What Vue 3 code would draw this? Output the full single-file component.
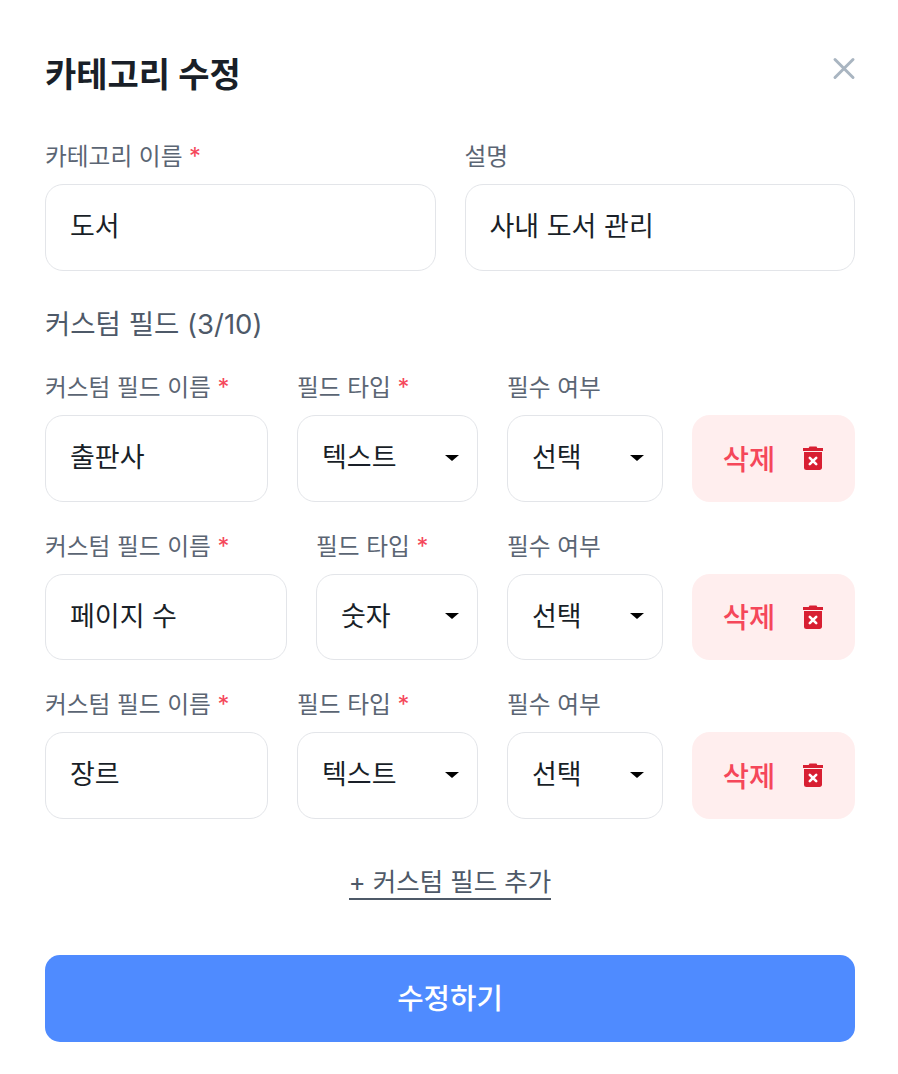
<template>
  <div class="modal">
    <div class="modal-header">
      <h2 class="modal-title">카테고리 수정</h2>
      <button class="close-btn" type="button" aria-label="닫기">
        <svg width="24" height="24" viewBox="0 0 24 24" fill="none">
          <path d="M3 2.500L21 20.500M21 2.500L3 20.500" stroke="#a9b5c1" stroke-width="3" stroke-linecap="round" />
        </svg>
      </button>
    </div>

    <div class="basic-row">
      <div class="field">
        <label class="label">카테고리 이름 <span class="req">*</span></label>
        <input class="input" value="도서" />
      </div>
      <div class="field">
        <label class="label">설명</label>
        <input class="input" value="사내 도서 관리" />
      </div>
    </div>

    <div class="section-title">커스텀 필드 (3/10)</div>

    <div class="custom-list">
      <div v-for="row in rows" :key="row.name" class="custom-row">
        <div class="field grow">
          <label class="label">커스텀 필드 이름 <span class="req">*</span></label>
          <input class="input" :value="row.name" />
        </div>
        <div class="field" :class="row.typeClass">
          <label class="label">필드 타입 <span class="req">*</span></label>
          <div class="select">
            <span>{{ row.type }}</span>
            <i class="caret"></i>
          </div>
        </div>
        <div class="field required-col">
          <label class="label">필수 여부</label>
          <div class="select">
            <span>선택</span>
            <i class="caret"></i>
          </div>
        </div>
        <button class="delete-btn" type="button">
          <span class="delete-text">삭제</span>
          <svg width="22" height="24" viewBox="0 0 22 24">
            <path d="M7.500 0.500h7l.8 1.500H21v3H1V2h5.700z" fill="#d81f32" />
            <path d="M2 6h18v15.500c0 1.300-1 2.500-2.500 2.500h-13A2.500 2.500 0 0 1 2 21.500z" fill="#d81f32" />
            <path d="M7.800 11.800l6.400 6.400M14.200 11.800l-6.400 6.400" stroke="#fff" stroke-width="2.600" stroke-linecap="round" />
          </svg>
        </button>
      </div>
    </div>

    <div class="add-wrap">
      <button class="add-btn" type="button">+ 커스텀 필드 추가</button>
    </div>

    <button class="submit-btn" type="button">수정하기</button>
  </div>
</template>

<script setup>
const rows = [
  { name: "출판사", type: "텍스트", typeClass: "type-wide" },
  { name: "페이지 수", type: "숫자", typeClass: "type-narrow" },
  { name: "장르", type: "텍스트", typeClass: "type-wide" },
];
</script>

<style>
html,
body {
  background: #fff;
}
</style>

<style scoped>
.modal {
  box-sizing: border-box;
  width: 898px;
  height: 1074px;
  padding: 47px 43px 32px 45px;
  background: #fff;
  font-family: Inter, "Noto Sans CJK KR", sans-serif;
  color: #191f28;
}

.modal-header {
  display: flex;
  align-items: flex-start;
  justify-content: space-between;
  height: 94px;
}

.modal-title {
  margin: 0;
  font-size: 34px;
  line-height: 56px;
  font-weight: 700;
  color: #191f28;
}

.close-btn {
  padding: 0;
  margin: 10px -1px 0 0;
  border: 0;
  background: none;
  display: flex;
}

.basic-row {
  display: grid;
  grid-template-columns: 1fr 1fr;
  gap: 29px;
}

.field {
  display: flex;
  flex-direction: column;
  min-width: 0;
}

.label {
  height: 32px;
  font-size: 23.7px;
  line-height: 32px;
  color: #5b6573;
  margin-bottom: 11px;
  white-space: nowrap;
}

.req {
  color: #f5475a;
}

.input,
.select {
  box-sizing: border-box;
  width: 100%;
  height: 86.5px;
  padding: 0 24px 5px;
  border: 1.5px solid #e3e5e9;
  border-radius: 18px;
  background: #fff;
  font-family: inherit;
  font-size: 27px;
  color: #191f28;
  outline: none;
}

.select {
  display: flex;
  align-items: center;
  justify-content: space-between;
}

.caret {
  width: 0;
  height: 0;
  margin: 4px -6px 0 0;
  border-left: 7px solid transparent;
  border-right: 7px solid transparent;
  border-top: 6px solid #000;
}

.section-title {
  margin-top: 35.5px;
  font-size: 27.500px;
  line-height: 36px;
  font-weight: 400;
  color: #4e5968;
}

.custom-list {
  display: flex;
  flex-direction: column;
  gap: 29px;
  margin-top: 30px;
}

.custom-row {
  display: flex;
  align-items: flex-end;
  gap: 29px;
}

.grow {
  flex: 1;
}

.type-wide {
  width: 181px;
}

.type-narrow {
  width: 162px;
}

.required-col {
  width: 156px;
}

.delete-btn {
  display: flex;
  align-items: center;
  justify-content: center;
  gap: 27px;
  width: 163px;
  height: 86.5px;
  padding: 0;
  border: 0;
  border-radius: 18px;
  background: #ffeeee;
  font-family: inherit;
  font-size: 28.5px;
  font-weight: 500;
  color: #f5475a;
}

.delete-text {
  margin-bottom: 2px;
}

.add-wrap {
  display: flex;
  justify-content: center;
  margin-top: 46px;
}

.add-btn {
  padding: 0;
  border: 0;
  border-bottom: 2px solid #4e5968;
  background: none;
  font-family: inherit;
  font-size: 25.500px;
  line-height: 33px;
  font-weight: 400;
  color: #4e5968;
}

.submit-btn {
  display: block;
  width: 810px;
  height: 86.5px;
  margin-top: 55.5px;
  padding: 0 0 4px;
  border: 0;
  border-radius: 15px;
  background: #4f8bff;
  font-family: inherit;
  font-size: 28.7px;
  font-weight: 500;
  color: #fff;
}
</style>
